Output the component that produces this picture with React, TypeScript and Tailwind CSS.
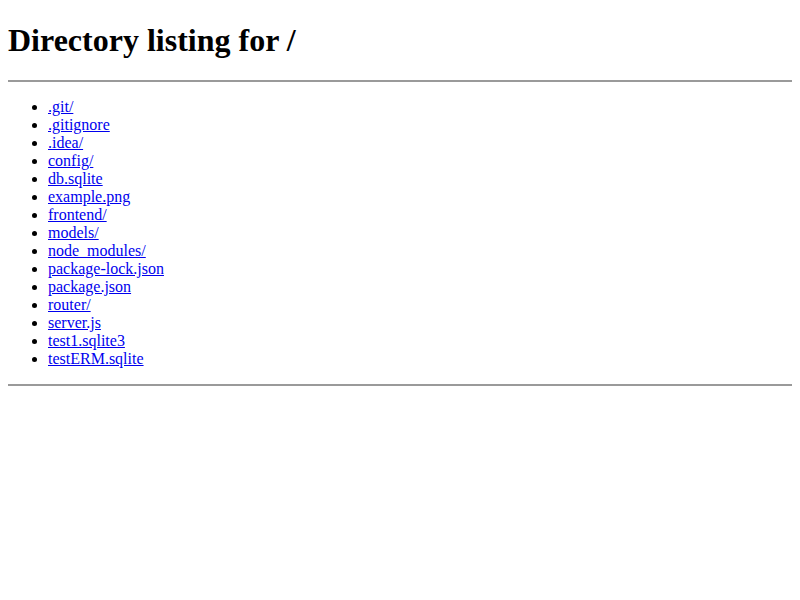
const files = [
  '.git/',
  '.gitignore',
  '.idea/',
  'config/',
  'db.sqlite',
  'example.png',
  'frontend/',
  'models/',
  'node_modules/',
  'package-lock.json',
  'package.json',
  'router/',
  'server.js',
  'test1.sqlite3',
  'testERM.sqlite',
]

export default function App() {
  return (
    <div className="min-h-screen bg-white px-2 pt-0.5 font-['Liberation_Serif',serif] text-black">
      <h1 className="mt-5 mb-[21px] text-[32px] font-bold leading-[37px]">Directory listing for /</h1>
      <hr className="border-t-2 border-[#9a9a9a]" />
      <ul className="my-4 list-disc pl-10 text-base leading-[18px]">
        {files.map((f) => (
          <li key={f}>
            <a href={f} className="text-[#0000ee] underline">
              {f}
            </a>
          </li>
        ))}
      </ul>
      <hr className="border-t-2 border-[#9a9a9a]" />
    </div>
  )
}
